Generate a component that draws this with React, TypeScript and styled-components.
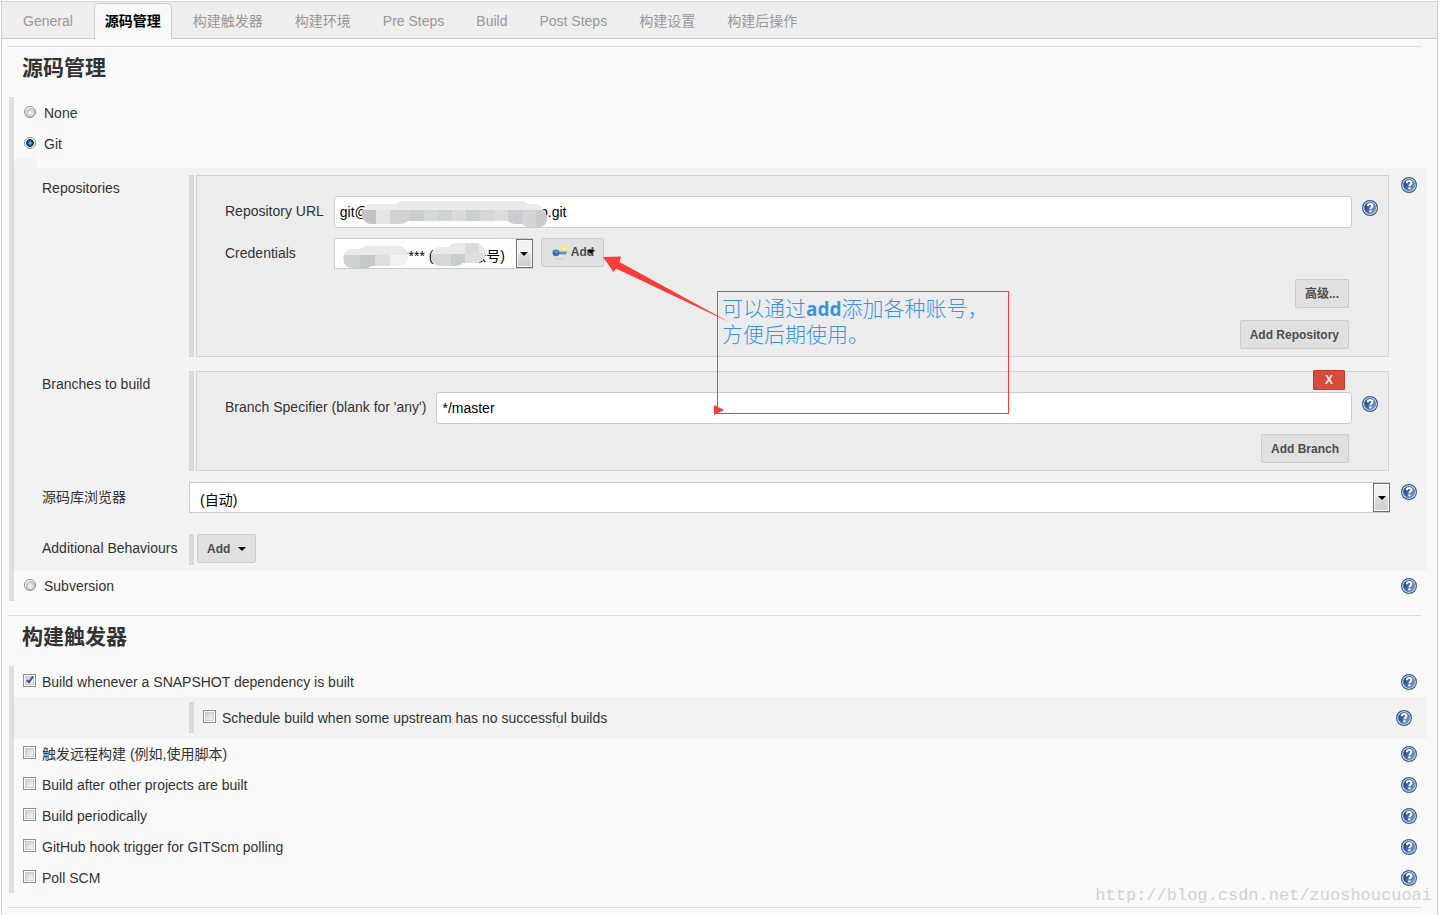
import React, { useId, useState } from "react";
import styled, { createGlobalStyle, css } from "styled-components";

const GlobalStyle = createGlobalStyle`
  *, *::before, *::after { box-sizing: border-box; }
  body {
    margin: 0;
    background: #fff;
    color: #333;
    font: 14px/20px "Liberation Sans", "Noto Sans CJK SC", sans-serif;
  }
  button, input, select { font-family: inherit; }
`;

const Page = styled.div`
  position: relative;
  margin: 1px 5px 0 1px;
  min-height: calc(100vh - 1px);
  overflow: hidden;
  background: #f9f9f9;
  border: 1px solid #ccc;
  border-top-color: #d5d6cc;
  border-bottom: 0;
`;

const TabBar = styled.nav`
  display: flex;
  gap: 10px;
  padding: 1px 10px 0;
  background: #eee;
  border-bottom: 1px solid #ccc;
`;

const Tab = styled.a<{ $active?: boolean }>`
  height: 36px;
  margin-bottom: -1px;
  padding: 0 10px;
  line-height: 34px;
  border: 1px solid transparent;
  border-bottom: 0;
  border-radius: 5px 5px 0 0;
  color: #999;
  text-decoration: none;
  white-space: nowrap;
  ${(p) =>
    p.$active &&
    css`
      background: #f9f9f9;
      border-color: #ccc;
      color: #000;
      font-weight: bold;
    `}
`;

const Main = styled.main`
  padding-top: 7px;
`;

const Section = styled.section`
  margin-bottom: 14px;
`;

const SectionHeader = styled.header`
  margin: 0 16px 0 5px;
  padding: 8px 15px 16px;
  border-top: 1px solid #ddd;
`;

const SectionTitle = styled.h2`
  margin: 0;
  font-size: 21px;
  line-height: 26px;
`;

const EndRule = styled.hr`
  margin: 0 16px 0 5px;
  border: 0;
  border-top: 1px solid #ddd;
`;

const Group = styled.div`
  margin-left: 7px;
  border-left: 5px solid #e0e0e0;
`;

const OptionRow = styled.div<{ $indent: number }>`
  display: flex;
  justify-content: space-between;
  align-items: center;
  min-height: 31px;
  padding: 0 20px 0 ${(p) => p.$indent}px;
`;

const OptionLabel = styled.label<{ $gap: number }>`
  display: flex;
  align-items: center;
  gap: ${(p) => p.$gap}px;
`;

const Radio = styled.input.attrs({ type: "radio" })`
  appearance: none;
  width: 12px;
  height: 12px;
  margin: 0 0 2px;
  border: 1px solid #8b8b8b;
  border-radius: 50%;
  background: radial-gradient(circle at 55% 60%, #eee 0 15%, #b9bcc1 55%, #fff 62%);
  &:checked {
    background: radial-gradient(circle at 50% 50%, #48b4e6 0 14%, #0d4c7c 32%, #123a5c 50%, #fff 60%);
  }
`;

const Checkbox = styled.input.attrs({ type: "checkbox" })`
  appearance: none;
  position: relative;
  width: 13px;
  height: 13px;
  margin: 0 0 2px;
  border: 1px solid #8e8f8f;
  background: linear-gradient(135deg, #b9bfca, #f4f4f4 75%);
  box-shadow: inset 0 0 0 1px #fff, inset 0 0 0 2px #c9ccd1;
  &:checked::after {
    content: "";
    position: absolute;
    left: 4px;
    top: 0;
    width: 4px;
    height: 8px;
    border: solid #3c50a0;
    border-width: 0 2px 2px 0;
    transform: rotate(35deg);
  }
`;

const BlockLead = styled.div`
  width: 25px;
  height: 9px;
  margin-left: -2px;
  background: rgba(0, 0, 0, 0.025);
`;

const Block = styled.div`
  margin: 0 10px 0 -2px;
  padding: 7px 10px 5px 30px;
  background: rgba(0, 0, 0, 0.027);
`;

const FormRow = styled.div<{ $after?: number }>`
  display: grid;
  grid-template-columns: 147px minmax(0, 1fr) 16px;
  margin-bottom: ${(p) => p.$after ?? 0}px;
`;

const RowLabel = styled.label<{ $top: number }>`
  padding-top: ${(p) => p.$top}px;
  white-space: nowrap;
`;

const RowHelp = styled.div`
  padding-top: 2px;
`;

const Repeatable = styled.div`
  margin-right: 11px;
  padding-left: 2px;
  border-left: 5px solid #d9d9d9;
`;

const Panel = styled.div`
  position: relative;
  margin-right: 1px;
  padding: 20px 10px 7px 28px;
  background: #ececec;
  border: 1px solid #d3d3d3;
`;

const Fields = styled.div`
  display: grid;
  grid-template-columns: auto minmax(0, 1fr) 16px;
  gap: 10px;
`;

const FieldLabel = styled.label`
  padding-top: 5px;
  white-space: nowrap;
`;

const FieldHelp = styled.div`
  padding-top: 4px;
`;

const TextInput = styled.input.attrs({ type: "text" })`
  display: block;
  width: 100%;
  height: 32px;
  padding: 0 5px;
  background: #fff;
  border: 1px solid #ccc;
  border-radius: 3px;
  color: #000;
  font-size: 14px;
`;

const Covered = styled.div`
  position: relative;
`;

const Mosaic = styled.svg`
  position: absolute;
  left: 0;
  top: 0;
  pointer-events: none;
`;

const Inline = styled.div`
  display: flex;
  align-items: flex-start;
  gap: 8px;
`;

const SelectBox = styled.div<{ $width?: string }>`
  position: relative;
  width: ${(p) => p.$width ?? "100%"};
`;

const Select = styled.select<{ $inset: number }>`
  appearance: none;
  display: block;
  width: 100%;
  height: 31px;
  padding: 4px 20px 0 ${(p) => p.$inset}px;
  background: #fff;
  border: 1px solid #ccc;
  border-radius: 0;
  color: #000;
  font-size: 14px;
`;

const SelectArrow = styled.span`
  position: absolute;
  top: 1px;
  right: 0;
  display: grid;
  place-items: center;
  width: 17px;
  height: 29px;
  border: 1px solid #707070;
  box-shadow: inset 0 0 0 1px #fafafa;
  background: linear-gradient(#f1f1f1 0 50%, #dedede 50%, #cfcfcf);
  pointer-events: none;
`;

const Caret = styled.span`
  width: 8px;
  height: 4px;
  border: 4px solid transparent;
  border-top-color: #000;
  border-bottom: 0;
`;

const LateCaret = styled(Caret)`
  position: absolute;
  right: 8px;
  top: 11px;
`;

const Button = styled.button`
  position: relative;
  display: inline-flex;
  align-items: center;
  gap: 8px;
  height: 29px;
  padding: 0 9px;
  background: #e0e0e0;
  border: 1px solid #ccc;
  border-radius: 2px;
  color: #4d4d4d;
  font-size: 12px;
  font-weight: bold;
  line-height: 16px;
  white-space: nowrap;
`;

const IconButton = styled(Button)`
  gap: 3px;
  padding: 0 9px 1px 10px;
`;

const ButtonStack = styled.div`
  display: flex;
  flex-direction: column;
  align-items: flex-end;
  gap: 12px;
  margin-top: 10px;
  padding-right: 29px;
`;

const DeleteButton = styled.button`
  position: absolute;
  top: -2px;
  right: 43px;
  width: 32px;
  height: 20px;
  padding: 0;
  background: #d54c3a;
  border: 1px solid #bf3c2b;
  border-radius: 1px;
  color: #f7e9e7;
  font-size: 12px;
  font-weight: bold;
  line-height: 18px;
`;

const AddSlot = styled.div`
  height: 31px;
  padding-left: 3px;
  border-left: 5px solid #d9d9d9;
`;

const SubBlock = styled.div`
  margin: 0 10px 0 -2px;
  padding: 5px 15px 5px 177px;
  background: rgba(0, 0, 0, 0.027);
`;

const SubRow = styled.div`
  display: flex;
  justify-content: space-between;
  align-items: center;
  height: 31px;
  padding-left: 9px;
  border-left: 5px solid #d9d9d9;
`;

const HelpLink = styled.a`
  display: block;
  width: 16px;
  height: 16px;
`;

const Note = styled.div`
  position: absolute;
  z-index: 2;
  left: 520px;
  top: 115px;
  width: 292px;
  height: 123px;
  padding: 4px;
  border: 1px solid #fb3b3a;
  color: #3a94e6;
  font: 21px/26px "Liberation Sans", "Noto Sans CJK SC", sans-serif;
  font-weight: 300;
  white-space: nowrap;
  pointer-events: none;
`;

const NoteStrong = styled.strong`
  font: bold 19px/20px "Open Sans", "Noto Sans", sans-serif;
`;

const NoteArrow = styled.svg`
  position: absolute;
  left: -116px;
  top: -37px;
`;

const NoteMarker = styled.svg`
  position: absolute;
  left: -4px;
  bottom: -2px;
`;

const Watermark = styled.div`
  position: absolute;
  right: 5px;
  top: 884px;
  color: #d2d2ce;
  font: 17px/20px "Liberation Mono", monospace;
  pointer-events: none;
`;

function Help({ topic }: { topic: string }) {
  const id = useId();
  return (
    <HelpLink href="#help" aria-label={`Help for ${topic}`}>
      <svg width="16" height="16" viewBox="0 0 16 16" aria-hidden="true">
        <defs>
          <linearGradient id={id} x1="0" y1="0.2" x2="1" y2="0.8">
            <stop offset="0.1" stopColor="#1d4583" />
            <stop offset="1" stopColor="#7fa3d3" />
          </linearGradient>
        </defs>
        <circle cx="8" cy="8" r="7.4" fill="#fff" stroke="#305a98" strokeWidth="1.2" />
        <circle cx="8" cy="8" r="5.7" fill={`url(#${id})`} stroke="#3c66a3" strokeWidth="0.6" />
        <path d="M5.7 6.2C5.800 4.600 6.800 4 8.100 4c1.400 0 2.300.7 2.300 1.900 0 1.600-2 1.500-2 3.300" fill="none" stroke="#fff" strokeWidth="2" />
        <rect x="7.300" y="10.300" width="2.200" height="2" fill="#fff" />
      </svg>
    </HelpLink>
  );
}

function KeyIcon() {
  return (
    <svg width="16" height="16" viewBox="0 0 16 16" aria-hidden="true">
      <ellipse cx="7" cy="14.800" rx="5.500" ry="0.800" fill="#cfcfcf" />
      <path d="M6 7.500h8.500l.5 1-1 1.500h-1l-.6.900-.8-.9h-1l-.6.900-1-.9H6z" fill="#5583c0" />
      <path d="M6.500 8h7.500" stroke="#8fb4de" strokeWidth="0.800" />
      <ellipse cx="4" cy="8.900" rx="3.500" ry="3.300" fill="#3f6fb2" />
      <ellipse cx="4.300" cy="7.600" rx="2.200" ry="1.200" fill="#6c98d0" />
      <circle cx="2.300" cy="9" r="0.700" fill="#284f8b" />
      <circle cx="12" cy="4.500" r="2.700" fill="#f8ec4f" />
      <circle cx="12" cy="4.500" r="1" fill="#fffbb5" />
    </svg>
  );
}

function UrlMosaic() {
  const id = useId();
  const tiles: [number, number, number, string][] = [
    [28, 14, 14, "#c2c2c3"], [42, 14, 14, "#e5e5e6"], [56, 14, 20, "#d2d2d3"],
    [76, 14, 14, "#cccdcf"], [90, 14, 14, "#d9d8d9"], [104, 14, 14, "#d1d2d3"],
    [118, 14, 14, "#dcdad9"], [132, 14, 14, "#cecfd0"], [146, 14, 14, "#d7d6d8"],
    [160, 14, 14, "#dddbda"], [174, 14, 14, "#cdcccf"], [188, 14, 14, "#d5d5d5"],
    [202, 14, 14, "#cccac9"], [216, 14, 8, "#dedede"],
  ];
  return (
    <Mosaic width="220" height="32" aria-hidden="true">
      <defs>
        <clipPath id={id}>
          <rect x="28" y="8" width="48" height="20" rx="9" />
          <rect x="60" y="5" width="136" height="20" rx="8" />
          <rect x="172" y="8" width="38" height="20" rx="9" />
          <rect x="186" y="14" width="27" height="17" rx="8" />
        </clipPath>
      </defs>
      <g clipPath={`url(#${id})`}>
        <rect x="26" y="4" width="190" height="28" fill="#eaebea" />
        {tiles.map(([x, y, w, fill]) => (
          <rect key={x} x={x} y={y} width={w} height="18" fill={fill} />
        ))}
      </g>
    </Mosaic>
  );
}

function AccountMosaic() {
  const id = useId();
  return (
    <Mosaic width="180" height="31" aria-hidden="true">
      <defs>
        <clipPath id={id}>
          <rect x="9" y="11" width="32" height="19" rx="9" />
          <rect x="24" y="8" width="50" height="20" rx="9" />
          <rect x="97" y="9" width="34" height="19" rx="9" />
          <rect x="113" y="5" width="38" height="20" rx="9" />
        </clipPath>
      </defs>
      <g clipPath={`url(#${id})`}>
        <rect width="180" height="31" fill="#e9e9e8" />
        <rect x="10" y="17" width="16" height="14" fill="#d0d1d2" />
        <rect x="26" y="17" width="15" height="14" fill="#c7c8cb" />
        <rect x="41" y="17" width="15" height="14" fill="#dedddf" />
        <rect x="56" y="17" width="18" height="14" fill="#f2f2f2" />
        <rect x="97" y="16" width="20" height="14" fill="#d8d8d9" />
        <rect x="117" y="16" width="14" height="14" fill="#cbcccd" />
        <rect x="131" y="5" width="14" height="10" fill="#d9dadb" />
        <rect x="131" y="15" width="20" height="12" fill="#dfdfe0" />
      </g>
    </Mosaic>
  );
}

const blank = (count: number) => "\u00a0".repeat(count);

const tabs = ["General", "源码管理", "构建触发器", "构建环境", "Pre Steps", "Build", "Post Steps", "构建设置", "构建后操作"];

const triggers = [
  "触发远程构建 (例如,使用脚本)",
  "Build after other projects are built",
  "Build periodically",
  "GitHub hook trigger for GITScm polling",
  "Poll SCM",
];

function ScmOption({ name, value, onPick, help }: { name: string; value: string; onPick: (v: string) => void; help?: boolean }) {
  return (
    <OptionRow $indent={10}>
      <OptionLabel $gap={8}>
        <Radio name="scm" checked={value === name} onChange={() => onPick(name)} />
        {name}
      </OptionLabel>
      {help && <Help topic={name} />}
    </OptionRow>
  );
}

function TriggerOption({ name, checked }: { name: string; checked?: boolean }) {
  return (
    <OptionRow $indent={9}>
      <OptionLabel $gap={6}>
        <Checkbox defaultChecked={checked} />
        {name}
      </OptionLabel>
      <Help topic={name} />
    </OptionRow>
  );
}

export default function App() {
  const [scm, setScm] = useState("Git");
  return (
    <Page>
      <GlobalStyle />
      <TabBar>
        {tabs.map((t, i) => (
          <Tab key={t} href={`#tab-${i}`} $active={i === 1}>
            {t}
          </Tab>
        ))}
      </TabBar>
      <Main>
        <Section>
          <SectionHeader>
            <SectionTitle>源码管理</SectionTitle>
          </SectionHeader>
          <Group>
            <ScmOption name="None" value={scm} onPick={setScm} />
            <ScmOption name="Git" value={scm} onPick={setScm} />
            <BlockLead />
            <Block>
              <FormRow $after={14}>
                <RowLabel as="span" $top={3}>Repositories</RowLabel>
                <Repeatable>
                  <Panel>
                    <Fields>
                      <FieldLabel htmlFor="repo-url">Repository URL</FieldLabel>
                      <Covered>
                        <TextInput id="repo-url" defaultValue={`git@${blank(44)}o.git`} />
                        <UrlMosaic />
                      </Covered>
                      <FieldHelp>
                        <Help topic="Repository URL" />
                      </FieldHelp>
                      <FieldLabel htmlFor="credentials">Credentials</FieldLabel>
                      <Inline>
                        <SelectBox $width="199px">
                          <Select id="credentials" $inset={6}>
                            <option>{`${blank(16)}**** (${blank(10)}账号)`}</option>
                          </Select>
                          <AccountMosaic />
                          <SelectArrow>
                            <Caret />
                          </SelectArrow>
                        </SelectBox>
                        <IconButton type="button">
                          <KeyIcon />
                          Add
                          <LateCaret />
                        </IconButton>
                      </Inline>
                    </Fields>
                    <ButtonStack>
                      <Button type="button">高级...</Button>
                      <Button type="button">Add Repository</Button>
                    </ButtonStack>
                    <Note>
                      可以通过<NoteStrong>add</NoteStrong>添加各种账号，
                      <br />
                      方便后期使用。
                      <NoteArrow width="130" height="70" viewBox="0 0 130 70" aria-hidden="true">
                        <path d="M1 2L19 1.500L17.500 7L127 67L14 13.500L11.500 17Z" fill="#fb3b3a" />
                      </NoteArrow>
                      <NoteMarker width="10" height="10" aria-hidden="true">
                        <path d="M0 0L10 5L0 10Z" fill="#fb3b3a" />
                      </NoteMarker>
                    </Note>
                  </Panel>
                </Repeatable>
                <RowHelp>
                  <Help topic="Repositories" />
                </RowHelp>
              </FormRow>
              <FormRow $after={11}>
                <RowLabel as="span" $top={3}>Branches to build</RowLabel>
                <Repeatable>
                  <Panel>
                    <DeleteButton type="button">X</DeleteButton>
                    <Fields>
                      <FieldLabel htmlFor="branch">Branch Specifier (blank for 'any')</FieldLabel>
                      <TextInput id="branch" defaultValue="*/master" />
                      <FieldHelp>
                        <Help topic="Branch Specifier" />
                      </FieldHelp>
                    </Fields>
                    <ButtonStack>
                      <Button type="button">Add Branch</Button>
                    </ButtonStack>
                  </Panel>
                </Repeatable>
              </FormRow>
              <FormRow $after={21}>
                <RowLabel htmlFor="browser" $top={5}>源码库浏览器</RowLabel>
                <SelectBox $width="calc(100% - 11px)">
                  <Select id="browser" $inset={10}>
                    <option>(自动)</option>
                  </Select>
                  <SelectArrow>
                    <Caret />
                  </SelectArrow>
                </SelectBox>
                <RowHelp>
                  <Help topic="源码库浏览器" />
                </RowHelp>
              </FormRow>
              <FormRow>
                <RowLabel as="span" $top={4}>Additional Behaviours</RowLabel>
                <AddSlot>
                  <Button type="button">
                    Add
                    <Caret />
                  </Button>
                </AddSlot>
              </FormRow>
            </Block>
            <ScmOption name="Subversion" value={scm} onPick={setScm} help />
          </Group>
        </Section>
        <Section>
          <SectionHeader>
            <SectionTitle>构建触发器</SectionTitle>
          </SectionHeader>
          <Group>
            <TriggerOption name="Build whenever a SNAPSHOT dependency is built" checked />
            <SubBlock>
              <SubRow>
                <OptionLabel $gap={6}>
                  <Checkbox />
                  Schedule build when some upstream has no successful builds
                </OptionLabel>
                <Help topic="Schedule build" />
              </SubRow>
            </SubBlock>
            {triggers.map((t) => (
              <TriggerOption key={t} name={t} />
            ))}
          </Group>
        </Section>
        <EndRule />
      </Main>
      <Watermark>http://blog.csdn.net/zuoshoucuoai</Watermark>
    </Page>
  );
}
